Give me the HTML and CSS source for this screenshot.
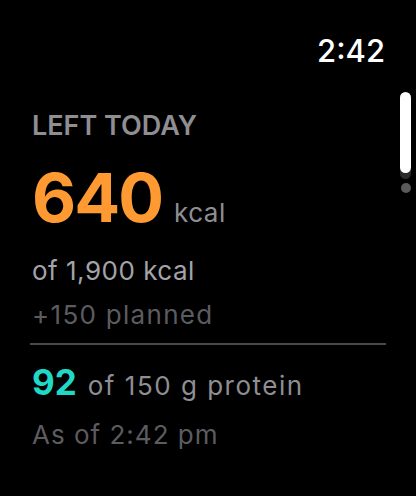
FILE: index.html
```html
<!DOCTYPE html>
<html lang="en">
<head>
  <meta charset="UTF-8">
  <title>Left Today</title>
  <link rel="stylesheet" href="styles.css">
</head>
<body>
  <div class="screen">
    <!-- status bar -->
    <div class="status">
      <span class="clock">2:42</span>
    </div>

    <div class="content">
      <div class="label">LEFT TODAY</div>
      <div class="big">
        <span class="big-num">640</span>
        <span class="big-unit">kcal</span>
      </div>
      <div class="goal">of 1,900 kcal</div>
      <div class="planned">+150 planned</div>
      <div class="divider"></div>
      <div class="protein">
        <span class="protein-num">92</span>
        <span class="protein-text">of 150 g protein</span>
      </div>
      <div class="updated">As of 2:42 pm</div>
    </div>

    <!-- scroll indicator -->
    <div class="scroller">
      <div class="scroller-bar"></div>
      <div class="scroller-dot"></div>
    </div>
  </div>
</body>
</html>
```

FILE: styles.css
```css
body {
  margin: 0;
  background: #000;
  font-family: Inter, "Noto Sans", sans-serif;
  color: #fff;
}
.screen {
  position: relative;
  width: 416px;
  height: 496px;
  overflow: hidden;
}
.status {
  display: flex;
  justify-content: flex-end;
  padding: 33px 31px 0 0;
}
.clock {
  font-size: 31px;
  font-weight: 500;
  line-height: 36px;
}
.content {
  padding: 0 0 0 32px;
  margin-top: 41px;
}
.label {
  font-size: 27px;
  font-weight: 600;
  color: #8e8e93;
  line-height: 32px;
}
.big {
  display: flex;
  align-items: baseline;
  gap: 12px;
  margin-top: 21px;
}
.big-num {
  font-size: 68px;
  font-weight: 700;
  color: #ff9a33;
  line-height: 68px;
  letter-spacing: -2px;
}
.big-unit {
  font-size: 26px;
  color: #8e8e93;
  letter-spacing: 0.5px;
}
.goal,
.planned,
.updated {
  font-size: 26px;
  line-height: 30px;
}
.goal {
  color: #a3a3a8;
  margin-top: 25px;
  letter-spacing: 0.5px;
}
.planned {
  color: #5c5c60;
  margin-top: 14px;
  letter-spacing: 1.3px;
}
.divider {
  height: 2px;
  background: #4a4a4c;
  margin: 13px 30px 0 -2px;
}
.protein {
  display: flex;
  align-items: baseline;
  gap: 11px;
  margin-top: 17px;
}
.protein-num {
  font-size: 35px;
  font-weight: 700;
  color: #1fd8c6;
  line-height: 40px;
}
.protein-text {
  font-size: 26px;
  color: #8e8e93;
  letter-spacing: 1.5px;
}
.updated {
  color: #5c5c60;
  margin-top: 18px;
  letter-spacing: 1px;
}
.scroller {
  position: absolute;
  right: 5px;
  top: 92px;
  display: flex;
  flex-direction: column;
  align-items: center;
}
.scroller-bar {
  width: 11px;
  height: 81px;
  border-radius: 6px;
  background: #fff;
  box-shadow: 0 6px 0 #2a2a2a;
}
.scroller-dot {
  width: 10px;
  height: 10px;
  border-radius: 50%;
  background: #5a5a5a;
  margin-top: 10px;
}
```
